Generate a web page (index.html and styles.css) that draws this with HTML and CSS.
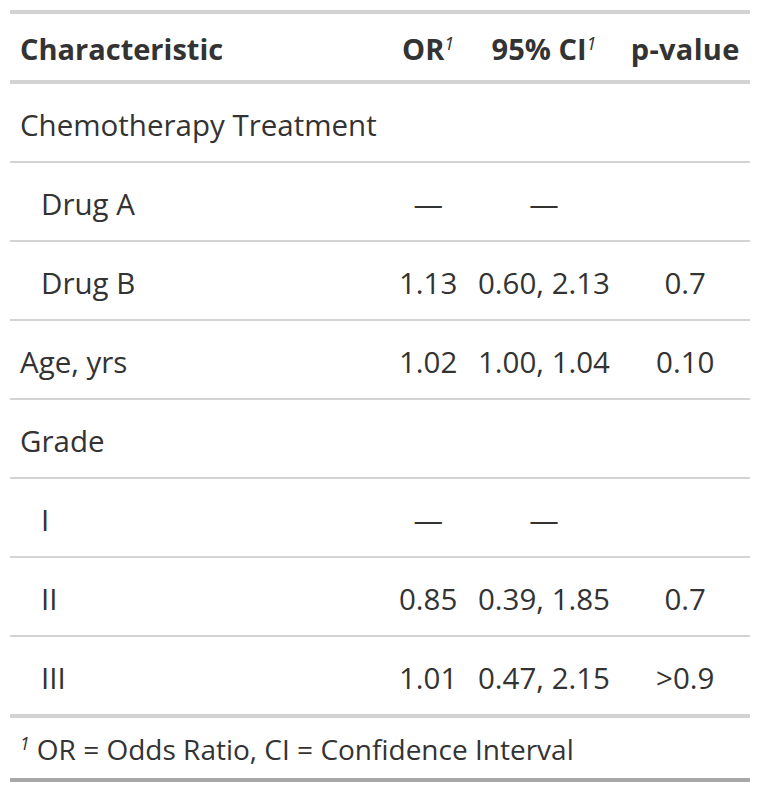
FILE: index.html
```html
<!DOCTYPE html>
<html>
<head>
<meta charset="utf-8">
<link rel="stylesheet" href="styles.css">
</head>
<body>
<table class="gt">
  <thead>
    <tr class="head-row">
      <th class="left">Characteristic</th>
      <th class="center">OR<sup class="fn">1</sup></th>
      <th class="center">95% CI<sup class="fn">1</sup></th>
      <th class="center pcol">p-value</th>
    </tr>
  </thead>
  <tbody>
    <tr><td class="left">Chemotherapy Treatment</td><td></td><td></td><td></td></tr>
    <tr><td class="left indent">Drug A</td><td class="center">—</td><td class="center">—</td><td></td></tr>
    <tr><td class="left indent">Drug B</td><td class="center">1.13</td><td class="center">0.60, 2.13</td><td class="center">0.7</td></tr>
    <tr><td class="left">Age, yrs</td><td class="center">1.02</td><td class="center">1.00, 1.04</td><td class="center">0.10</td></tr>
    <tr><td class="left">Grade</td><td></td><td></td><td></td></tr>
    <tr><td class="left indent">I</td><td class="center">—</td><td class="center">—</td><td></td></tr>
    <tr><td class="left indent">II</td><td class="center">0.85</td><td class="center">0.39, 1.85</td><td class="center">0.7</td></tr>
    <tr class="last"><td class="left indent">III</td><td class="center">1.01</td><td class="center">0.47, 2.15</td><td class="center">&gt;0.9</td></tr>
  </tbody>
  <tfoot>
    <tr><td colspan="4" class="footnote"><sup class="fn">1</sup> OR = Odds Ratio, CI = Confidence Interval</td></tr>
  </tfoot>
</table>
</body>
</html>
```

FILE: styles.css
```css
html, body {
  margin: 0;
  padding: 0;
  background: #ffffff;
}
body {
  padding: 10px 10px 0 10px;
  font-family: "Open Sans", "Noto Sans", sans-serif;
  color: #333333;
}
.gt {
  width: 740px;
  border-collapse: collapse;
  border-top: 4px solid #d3d3d3;
  border-bottom: 4px solid #a8a8a8;
  font-size: 29.5px;
}
.gt th, .gt td {
  padding: 0 10px;
  white-space: nowrap;
}
.head-row th {
  height: 64px;
  padding-top: 2px;
  font-size: 29px;
  font-weight: bold;
  vertical-align: middle;
  border-bottom: 4px solid #d3d3d3;
}
.head-row th.pcol {
  letter-spacing: 0.3px;
}
.gt tbody td {
  height: 74px;
  padding-top: 3px;
  border-bottom: 2px solid #d3d3d3;
  vertical-align: middle;
}
.gt tbody tr.last td {
  border-bottom: 4px solid #d3d3d3;
}
.left { text-align: left; }
.center { text-align: center; }
.indent { padding-left: 31px !important; }
.fn {
  font-style: italic;
  font-weight: normal;
  font-size: 62%;
  vertical-align: 0.55em;
  line-height: 0;
}
.gt tfoot td.footnote {
  height: 58px;
  padding-top: 2px;
  font-size: 28px;
  vertical-align: middle;
}
```
